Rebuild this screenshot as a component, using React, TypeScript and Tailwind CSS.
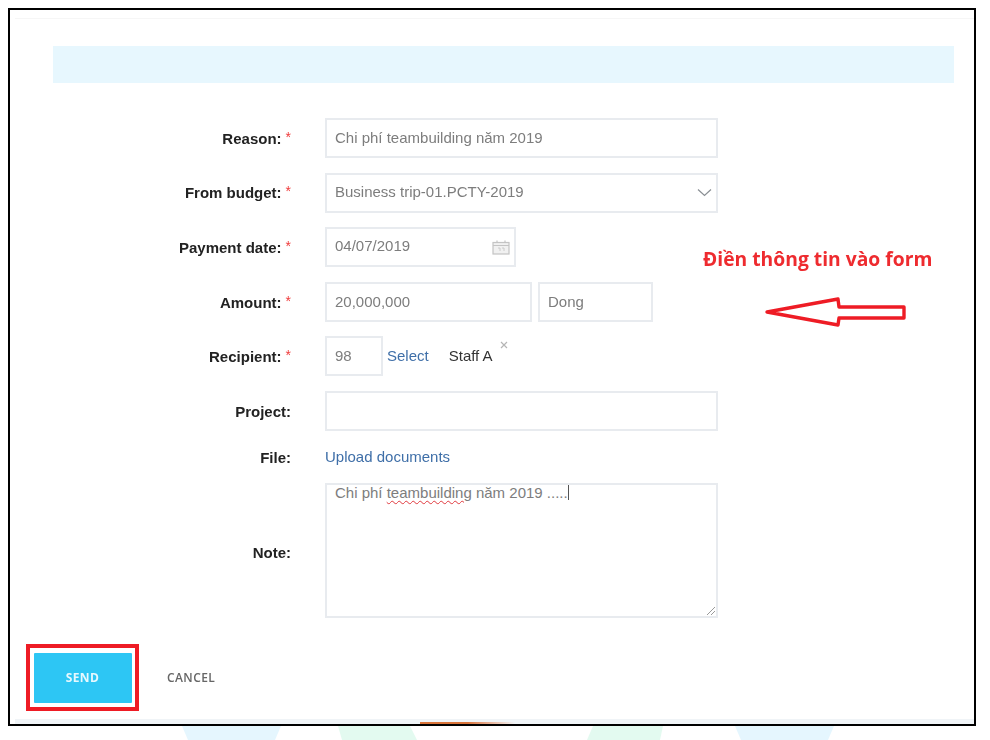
import React from "react";

const box = "border-2 border-[#e8ebef] bg-white flex items-center pl-[8px] text-[15px] text-[#7d7d7d] h-full";

function Label({ text, required, className = "" }: { text: string; required?: boolean; className?: string }) {
  return (
    <div className={`w-[238px] shrink-0 text-right text-[15px] font-bold text-[#222222] whitespace-nowrap relative top-[1px] ${className}`}>
      {text}
      {required && <span className="ml-[4px] font-normal text-[14px] text-[#ef3b3b] relative -top-[2px]">*</span>}
    </div>
  );
}

function Row({ label, required, h = "h-[40px]", labelClass, children }: { label: string; required?: boolean; h?: string; labelClass?: string; children: React.ReactNode }) {
  return (
    <div className={`flex items-center gap-[34px] ${h}`}>
      <Label text={label} required={required} className={labelClass} />
      {children}
    </div>
  );
}

export default function App() {
  return (
    <div className="w-[990px] h-[740px] bg-white overflow-hidden flex flex-col pt-[8px] pl-[8px] font-['Liberation_Sans',Arial,sans-serif]">
      <div className="relative w-[968px] h-[718px] shrink-0 border-2 border-black bg-white overflow-hidden">
        <div className="absolute left-[5px] right-0 top-[8px] h-px bg-[#f6f6f6]" />
        <div className="absolute left-[5px] right-0 bottom-0 h-[5px] bg-[#f0f4f7]" />
        <div className="absolute left-[410px] w-[95px] bottom-0 h-[2px] bg-gradient-to-r from-[#d9743a] via-[#d9743a] to-[#f0f4f7]" />

        <div className="ml-[43px] mt-[36px] w-[901px] h-[37px] bg-[#e7f7fe]" />

        <div className="ml-[43px] mt-[35px] flex flex-col gap-[14.6px] blur-[0.4px]">
          <Row label="Reason:" required>
            <div className={`${box} w-[393px]`}>Chi phí teambuilding năm 2019</div>
          </Row>
          <Row label="From budget:" required>
            <div className={`${box} w-[393px] justify-between pr-[4px]`}>
              <span>Business trip-01.PCTY-2019</span>
              <svg width="15" height="9" viewBox="0 0 15 9" fill="none" stroke="#8a8f94" strokeWidth="1.2">
                <path d="M1 1.5 L7.5 7.5 L14 1.5" />
              </svg>
            </div>
          </Row>
          <Row label="Payment date:" required>
            <div className={`${box} w-[191px] justify-between pr-[4px]`}>
              <span className="relative -top-[1px]">04/07/2019</span>
              <svg width="18" height="15" viewBox="0 0 18 15" fill="none" stroke="#c4c4c4" strokeWidth="1.2">
                <rect x="1" y="2.5" width="16" height="11.5" fill="#f1f1f1" />
                <path d="M1 5.5 H17 M5 0.5 V3 M13 0.5 V3" />
                <path d="M6 8 H8 V11 M10 8 H12 V11" strokeWidth="0.8" />
              </svg>
            </div>
          </Row>
          <Row label="Amount:" required>
            <div className="flex h-full gap-[6px]">
              <div className={`${box} w-[207px]`}>20,000,000</div>
              <div className={`${box} w-[115px]`}>Dong</div>
            </div>
          </Row>
          <Row label="Recipient:" required>
            <div className="flex h-full items-center text-[15px]">
              <div className={`${box} w-[58px]`}>98</div>
              <span className="ml-[4px] text-[#3f6fa8]">Select</span>
              <span className="ml-[20px] text-[#333333]">Staff A</span>
              <svg className="ml-[7px] mb-[22px]" width="8" height="8" viewBox="0 0 8 8" fill="none" stroke="#b5b5b5" strokeWidth="1.2">
                <path d="M1 1 L7 7 M7 1 L1 7" />
              </svg>
            </div>
          </Row>
          <Row label="Project:">
            <div className={`${box} w-[393px]`} />
          </Row>
          <Row label="File:" h="h-[23px]">
            <span className="text-[15px] text-[#3f6fa8]">Upload documents</span>
          </Row>
          <Row label="Note:" h="h-[135px]" labelClass="top-[3px]">
            <div className={`${box} relative w-[393px] !items-start -mt-[1px]`}>
              <span className="whitespace-nowrap leading-[16px]">
                Chi phí{" "}
                <span className="underline decoration-wavy decoration-[#e0393e] decoration-1 underline-offset-2">teambuilding</span>{" "}
                năm 2019 .....
              </span>
              <span className="w-px h-[15px] bg-[#555555]" />
              <svg className="absolute right-0 bottom-0" width="11" height="11" viewBox="0 0 11 11" fill="none" stroke="#9a9a9a" strokeWidth="1">
                <path d="M10 2 L2 10 M10 6 L6 10" />
              </svg>
            </div>
          </Row>
        </div>

        <div className="ml-[16px] mt-[26px] flex items-center blur-[0.4px]">
          <div className="w-[113px] h-[67px] border-[4px] border-[#ee1c25] flex items-center justify-center bg-white">
            <div className="w-[98px] h-[50px] bg-[#2dc6f4] rounded-[1px] flex items-center justify-center text-[12px] font-bold text-[#e6f8fe] tracking-[0.4px] font-['Open_Sans',sans-serif]">
              SEND
            </div>
          </div>
          <span className="ml-[28px] text-[12px] font-semibold text-[#666666] tracking-[0.4px] font-['Open_Sans',sans-serif]">CANCEL</span>
        </div>

        <div className="absolute left-[693px] top-[235px] text-[19.3px] font-bold leading-[28px] text-[#ee2b2f] whitespace-nowrap font-['Open_Sans',sans-serif] blur-[0.3px]">
          Điền thông tin vào form
        </div>
        <svg className="absolute left-[750px] top-[282px]" width="150" height="40" viewBox="0 0 150 40" fill="none" stroke="#ee1c25" strokeWidth="3.4">
          <path d="M7 20 L78 7 L79 15 L144 15 L144 26 L79 26 L78 33 Z" strokeLinejoin="round" />
        </svg>
      </div>

      <svg className="shrink-0 -ml-[8px]" width="990" height="14" viewBox="0 0 990 14">
        <path d="M182 0 H281 L275 14 H188 Z" fill="#e5f6fe" />
        <path d="M338 0 H410 L417 14 H342 Z" fill="#e3faf0" />
        <path d="M593 0 H663 L660 14 H587 Z" fill="#e3faf0" />
        <path d="M735 0 H834 L828 14 H741 Z" fill="#e5f6fe" />
      </svg>
    </div>
  );
}
